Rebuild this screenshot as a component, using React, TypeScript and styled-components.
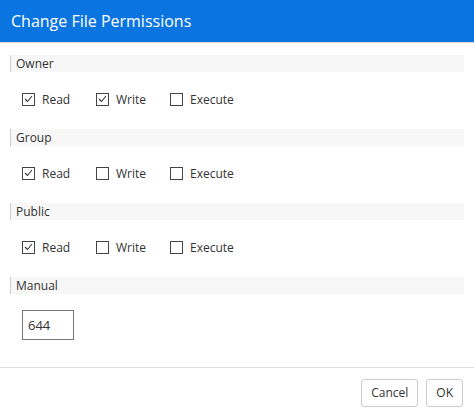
import React from "react";
import styled, { createGlobalStyle } from "styled-components";

const Global = createGlobalStyle`
  body { margin: 0; font-family: "Open Sans", sans-serif; font-size: 12px; color: #333; background: #fff; }
`;
const Dialog = styled.div` width: 474px; height: 417px; display: flex; flex-direction: column; `;
const Header = styled.div`
  height: 42px; background: #0a74e0; color: #fff; font-size: 16px;
  display: flex; align-items: center; padding-left: 11px; border-bottom: 1px solid #d8d8d8;
`;
const Body = styled.div` flex: 1; padding: 12px 10px 0 10px; display: flex; flex-direction: column; `;
const SectionTitle = styled.div`
  height: 17px; background: #f7f7f7; border-left: 1px solid #ccc; padding-left: 5px;
  line-height: 17px; font-size: 12px;
`;
const Row = styled.div` display: flex; align-items: center; height: 20px; margin: 17px 0 20px 12px; `;
const Opt = styled.label` display: flex; align-items: center; width: 74px; gap: 7px; `;
const Box = styled.span`
  width: 11px; height: 11px; border: 1px solid #444; display: inline-flex; align-items: center; justify-content: center;
`;
const Input = styled.div`
  width: 45px; height: 28px; border: 1px solid #777; margin: 16px 0 0 12px; padding-left: 5px;
  display: flex; align-items: center; font-size: 13px;
`;
const Footer = styled.div`
  height: 49px; border-top: 1px solid #ddd; display: flex; justify-content: flex-end; align-items: center; gap: 8px; padding-right: 11px;
`;
const Btn = styled.button`
  height: 28px; min-width: 36px; padding: 0 9px; border: 1px solid #ccc; border-radius: 3px; background: #fff;
  font-family: "Open Sans", sans-serif; font-size: 12px; color: #333;
`;

const Check = ({ on }: { on: boolean }) => (
  <Box>{on && <svg width="9" height="8" viewBox="0 0 9 8"><path d="M1 4l2.5 2.5L8 1" fill="none" stroke="#333" strokeWidth="1.1" /></svg>}</Box>
);

const sections: [string, boolean[]][] = [
  ["Owner", [true, true, false]],
  ["Group", [true, false, false]],
  ["Public", [true, false, false]],
];

export default function App() {
  return (
    <Dialog>
      <Global />
      <Header>Change File Permissions</Header>
      <Body>
        {sections.map(([name, v]) => (
          <div key={name}>
            <SectionTitle>{name}</SectionTitle>
            <Row>
              {["Read", "Write", "Execute"].map((l, i) => (
                <Opt key={l}><Check on={v[i]} />{l}</Opt>
              ))}
            </Row>
          </div>
        ))}
        <SectionTitle>Manual</SectionTitle>
        <Input>644</Input>
      </Body>
      <Footer>
        <Btn>Cancel</Btn>
        <Btn>OK</Btn>
      </Footer>
    </Dialog>
  );
}
